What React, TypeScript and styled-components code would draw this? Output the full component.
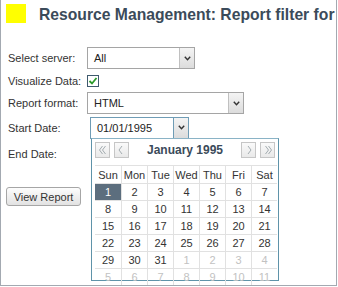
import React from "react";
import styled, { createGlobalStyle } from "styled-components";

const GlobalStyle = createGlobalStyle`
    html, body { margin: 0; padding: 0; background: #fff; }
    body { font-family: "Liberation Sans", Arial, sans-serif; font-size: 11px; color: #333; }
`;

const Page = styled.div`
    position: relative;
    box-sizing: border-box;
    width: 337px;
    height: 286px;
    border: 1px solid #a3a9b1;
    border-top: none;
    overflow: hidden;
`;

const Header = styled.div`
    display: flex;
    align-items: flex-start;
    height: 29px;
    padding: 4px 0 0 5px;
    box-sizing: border-box;
`;

const Swatch = styled.div`
    width: 20px;
    height: 19px;
    background: #ffff00;
    flex: none;
`;

const Title = styled.h1`
    margin: 1px 0 0 13px;
    font-family: "Liberation Sans", Arial, sans-serif;
    font-size: 15.7px;
    line-height: 19px;
    font-weight: bold;
    color: #3b4b5a;
    white-space: nowrap;
`;

const Form = styled.div`
    display: grid;
    grid-template-columns: 79px 1fr;
    grid-auto-rows: auto;
    padding: 18px 0 0 7px;
    row-gap: 2px;
`;

const Label = styled.div<{ $h: number }>`
    height: ${p => p.$h}px;
    display: flex;
    align-items: center;
    color: #333;
`;

const Field = styled.div<{ $h: number }>`
    position: relative;
    height: ${p => p.$h}px;
    display: flex;
    align-items: center;
`;

const SelectBox = styled.div<{ $w: number; $blue?: boolean; $indent?: number }>`
    box-sizing: border-box;
    width: ${p => p.$w}px;
    height: 22px;
    margin-left: ${p => p.$indent || 0}px;
    display: flex;
    align-items: center;
    border: 1px solid ${p => (p.$blue ? "#6f9cb5" : "#a5a5a5")};
    background: #fff;
`;

const SelectText = styled.span`
    flex: 1;
    padding-left: 6px;
    color: #222;
    font-size: 11px;
`;

const Arrow = styled.span<{ $blue?: boolean }>`
    box-sizing: border-box;
    width: 15px;
    height: 20px;
    display: flex;
    align-items: center;
    justify-content: center;
    border-left: 1px solid ${p => (p.$blue ? "#6f9cb5" : "#c0c0c0")};
    background: linear-gradient(#f4f4f4, #dcdcdc);
`;

const Check = styled.div`
    box-sizing: border-box;
    width: 12px;
    height: 12px;
    border: 1px solid #3f5a6e;
    background: #fff;
    display: flex;
    align-items: center;
    justify-content: center;
`;

const Button = styled.button`
    margin: 20px 0 0 5px;
    width: 75px;
    height: 19px;
    padding: 0;
    font-family: "Liberation Sans", Arial, sans-serif;
    font-size: 11px;
    color: #333;
    border: 1px solid #a6a6a6;
    border-radius: 3px;
    background: linear-gradient(#fdfdfd, #e2e2e2);
`;

const Calendar = styled.div`
    position: absolute;
    left: 90px;
    top: 138px;
    box-sizing: border-box;
    width: 188px;
    height: 143px;
    border: 1px solid #5f93a9;
    border-top-color: #8ab3c6;
    background: #fff;
    padding: 3px 2px 0 2px;
`;

const CalHead = styled.div`
    display: flex;
    align-items: center;
    gap: 4px;
    height: 16px;
    padding: 0 1px;
    margin-bottom: 7px;
`;

const NavBtn = styled.span`
    box-sizing: border-box;
    width: 15px;
    height: 16px;
    border: 1px solid #c6c6c6;
    background: linear-gradient(#fafafa, #e9e9e9);
    display: flex;
    align-items: center;
    justify-content: center;
`;

const Month = styled.span`
    flex: 1;
    text-align: center;
    font-family: "Liberation Sans", Arial, sans-serif;
    font-weight: bold;
    font-size: 12px;
    color: #3b4b5a;
`;

const Grid = styled.div`
    display: grid;
    grid-template-columns: repeat(7, 1fr);
    width: 182px;
    margin-left: 1px;
`;

const Cell = styled.div<{ $head?: boolean; $dim?: boolean; $sel?: boolean; $col: number }>`
    height: ${p => (p.$head ? 17 : 16)}px;
    display: flex;
    align-items: center;
    justify-content: center;
    font-size: 11px;
    color: ${p => (p.$sel ? "#fff" : p.$dim ? "#c2c2c2" : "#333")};
    background: ${p => (p.$sel ? "#5c6e7e" : "transparent")};
    border-left: ${p => (p.$col === 0 ? "none" : "1px solid #e1e1e1")};
    border-top: 1px solid #e1e1e1;
`;

const days = ["Sun", "Mon", "Tue", "Wed", "Thu", "Fri", "Sat"];

function ChevronDown() {
    return (
        <svg width="7" height="5" viewBox="0 0 7 5">
            <path d="M0.8 0.8 L3.5 3.8 L6.2 0.8" fill="none" stroke="#333" strokeWidth="1.4" />
        </svg>
    );
}

const navPaths = {
    l: ["M6 2 L3 6 L6 10"],
    r: ["M5 2 L8 6 L5 10"],
    ll: ["M5.5 2 L2.5 6 L5.5 10", "M8.5 2 L5.5 6 L8.5 10"],
    rr: ["M3.5 2 L6.5 6 L3.5 10", "M6.5 2 L9.5 6 L6.5 10"],
};

function Nav({ kind }: { kind: keyof typeof navPaths }) {
    return (
        <NavBtn>
            <svg width="12" height="12" viewBox="0 0 12 12">
                {navPaths[kind].map(d => (
                    <path key={d} d={d} fill="none" stroke="#9aa4a8" strokeWidth="0.9" />
                ))}
            </svg>
        </NavBtn>
    );
}

export default function App() {
    const cells: { n: number; dim: boolean }[] = [];
    for (let i = 1; i <= 31; i++) cells.push({ n: i, dim: false });
    for (let i = 1; i <= 11; i++) cells.push({ n: i, dim: true });

    return (
        <>
            <GlobalStyle />
            <Page>
                <Header>
                    <Swatch />
                    <Title>Resource Management: Report filter for</Title>
                </Header>
                <Form>
                    <Label $h={22}>Select server:</Label>
                    <Field $h={22}>
                        <SelectBox $w={108}>
                            <SelectText>All</SelectText>
                            <Arrow><ChevronDown /></Arrow>
                        </SelectBox>
                    </Field>
                    <Label $h={19}>Visualize Data:</Label>
                    <Field $h={19}>
                        <Check>
                            <svg width="10" height="10" viewBox="0 0 10 10">
                                <path d="M1.5 5 L4 7.5 L8.5 2" fill="none" stroke="#2a9a2a" strokeWidth="1.8" />
                            </svg>
                        </Check>
                    </Field>
                    <Label $h={22}>Report format:</Label>
                    <Field $h={22}>
                        <SelectBox $w={157}>
                            <SelectText>HTML</SelectText>
                            <Arrow><ChevronDown /></Arrow>
                        </SelectBox>
                    </Field>
                    <Label $h={23}>Start Date:</Label>
                    <Field $h={23}>
                        <SelectBox $w={99} $blue $indent={3}>
                            <SelectText>01/01/1995</SelectText>
                            <Arrow $blue><ChevronDown /></Arrow>
                        </SelectBox>
                    </Field>
                    <Label $h={26}>End Date:</Label>
                    <Field $h={26} />
                </Form>
                <Button>View Report</Button>
                <Calendar>
                    <CalHead>
                        <Nav kind="ll" />
                        <Nav kind="l" />
                        <Month>January 1995</Month>
                        <Nav kind="r" />
                        <Nav kind="rr" />
                    </CalHead>
                    <Grid>
                        {days.map((d, i) => (
                            <Cell key={d} $head $col={i}>{d}</Cell>
                        ))}
                        {cells.map((c, i) => (
                            <Cell key={i} $col={i % 7} $dim={c.dim} $sel={i === 0}>{c.n}</Cell>
                        ))}
                    </Grid>
                </Calendar>
            </Page>
        </>
    );
}
